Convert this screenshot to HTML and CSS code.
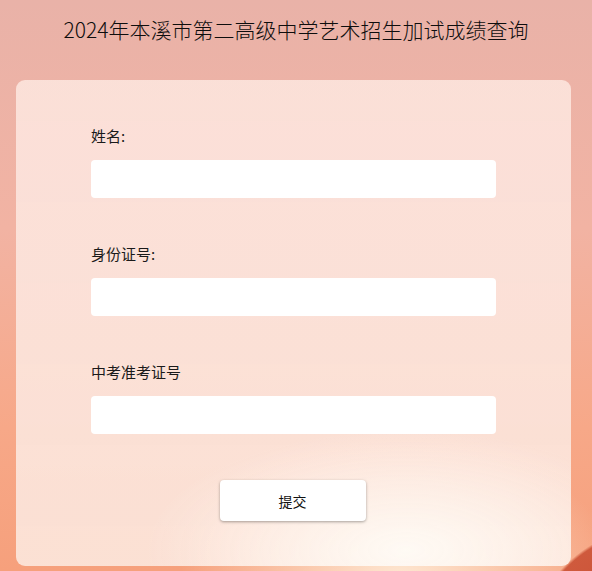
FILE: index.html
```html
<!DOCTYPE html>
<html lang="zh-CN">
<head>
    <meta charset="UTF-8">
    <meta name="viewport" content="width=device-width, initial-scale=1.0">
    <title>成绩查询</title>
    <link rel="stylesheet" href="styles.css">
</head>
<body>
    <h1 class="title">2024年本溪市第二高级中学艺术招生加试成绩查询</h1>
    <div class="card">
        <form class="query-form" onsubmit="return false">
            <label class="field">
                <span class="field-name">姓名:</span>
                <input type="text" id="name">
            </label>
            <label class="field">
                <span class="field-name">身份证号:</span>
                <input type="text" id="idcard">
            </label>
            <label class="field">
                <span class="field-name">中考准考证号</span>
                <input type="text" id="examno">
            </label>
            <div class="actions">
                <button type="submit" class="submit-btn">提交</button>
            </div>
        </form>
    </div>
</body>
</html>
```

FILE: styles.css
```css
html, body {
    margin: 0;
    padding: 0;
}
body {
    min-height: 100vh;
    font-family: "Noto Sans CJK SC", "Noto Sans", sans-serif;
    color: #1a1a1a;
    background:
        radial-gradient(circle at 662px 662px, #c4452f 0, #cf5a3d 134px, rgba(207, 90, 61, 0) 137px),
        radial-gradient(ellipse 220px 140px at 400px 580px, rgba(255, 240, 220, 0.9), rgba(255, 240, 220, 0) 100%),
        linear-gradient(180deg, #e9b2a8 0%, #f2b3a3 40%, #f7a888 75%, #f6a07c 100%);
    overflow: hidden;
}
.title {
    margin: 0;
    padding: 12px 0 34px;
    font-size: 21px;
    font-weight: 300;
    line-height: 34px;
    text-align: center;
    color: #0d0d0d;
}
.card {
    margin: 0 21px 0 16px;
    padding: 46px 0 45px;
    border-radius: 9px;
    background:
        radial-gradient(ellipse 260px 120px at 390px 470px, rgba(255, 253, 248, 0.85), rgba(255, 253, 248, 0) 100%),
        linear-gradient(180deg, rgba(252, 228, 221, 0.9) 0%, rgba(252, 233, 224, 0.88) 100%);
}
.query-form {
    width: 405px;
    margin-left: 75px;
}
.field {
    display: block;
    margin-bottom: 46px;
}
.field-name {
    display: block;
    font-size: 15px;
    line-height: 20px;
    margin-bottom: 14px;
    color: #1a1a1a;
}
.field input {
    display: block;
    width: 100%;
    height: 38px;
    box-sizing: border-box;
    border: none;
    border-radius: 4px;
    background: #fff;
    padding: 0 10px;
    font-size: 14px;
    outline: none;
}
.actions {
    display: flex;
    justify-content: center;
    padding-right: 2px;
}
.submit-btn {
    width: 146px;
    height: 41px;
    border: none;
    border-radius: 4px;
    background: #fff;
    box-shadow: 0 1px 3px rgba(0, 0, 0, 0.35);
    font-family: inherit;
    font-size: 14px;
    color: #111;
    cursor: pointer;
}
```
